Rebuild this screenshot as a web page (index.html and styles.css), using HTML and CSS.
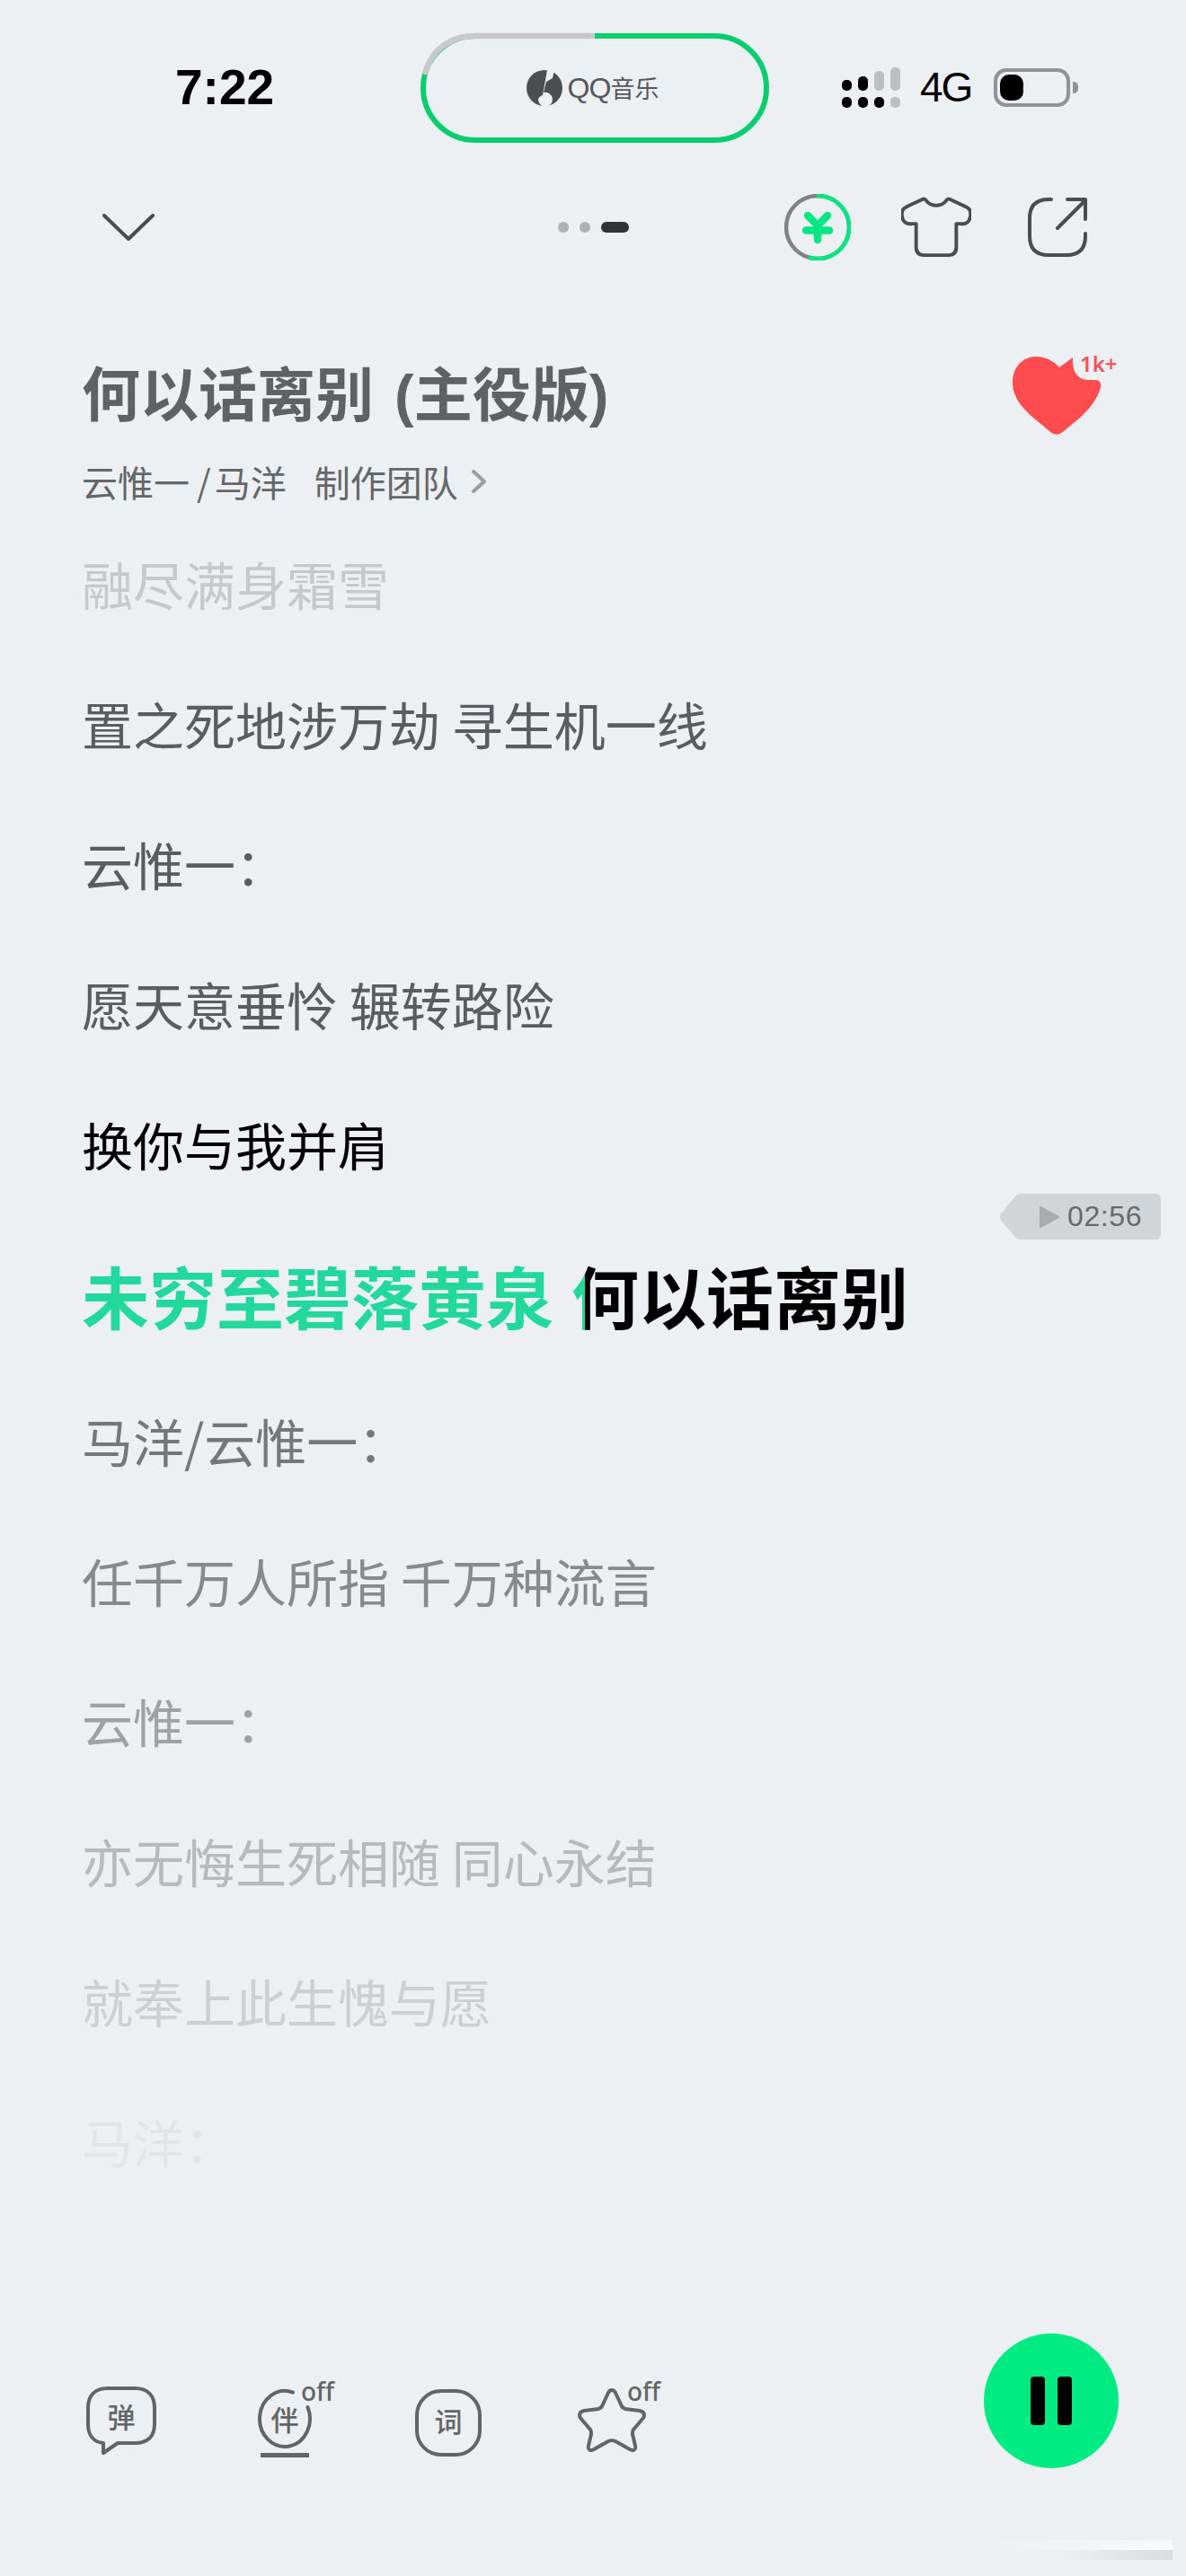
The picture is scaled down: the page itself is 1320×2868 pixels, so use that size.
FILE: index.html
```html
<!DOCTYPE html>
<html lang="zh-CN">
<head>
    <meta charset="UTF-8">
    <title>何以话离别 (主役版)</title>
    <link rel="stylesheet" href="styles.css">
</head>
<body>
    <!-- Status bar -->
    <div class="status-bar">
        <div class="time">7:22</div>
        <div class="island">
            <svg class="island-ring" width="390" height="124" viewBox="0 0 390 124">
                <rect x="4" y="4" width="382" height="116" rx="58" fill="none" stroke="#08ce6f" stroke-width="6"/>
                <path d="M195 4H62C34 4 12 20 6 47" fill="none" stroke="#c9c9c9" stroke-width="6.5"/>
            </svg>
            <svg class="island-logo" width="42" height="42" viewBox="0 0 42 42">
                <ellipse cx="21" cy="21" rx="20" ry="20" fill="#4d4e50"/>
                <path d="M24 1h8l-2 9-7 4-3 12a8 8 0 1 1-6 7 9 9 0 0 1 5-4z" fill="#ecf0f3"/>
                <circle cx="20" cy="31" r="2.5" fill="#ecf0f3"/>
            </svg>
            <span class="island-text"><span class="island-qq">QQ</span>音乐</span>
        </div>
        <div class="status-icons">
            <div class="signal">
                <div class="signal-col"><i class="dot h12"></i><i class="dot h12"></i></div>
                <div class="signal-col"><i class="dot h16"></i><i class="dot h12"></i></div>
                <div class="signal-col"><i class="dot h22 dim"></i><i class="dot h12"></i></div>
                <div class="signal-col"><i class="dot h26 dim"></i><i class="dot h12 dim"></i></div>
            </div>
            <span class="net">4G</span>
            <div class="battery"><div class="battery-fill"></div></div>
            <div class="battery-tip"></div>
        </div>
    </div>

    <!-- Top nav -->
    <div class="nav">
        <svg width="58" height="30" viewBox="0 0 58 30">
            <path d="M2 2L29 28L56 2" fill="none" stroke="#4a4c4f" stroke-width="4" stroke-linecap="round" stroke-linejoin="round"/>
        </svg>
        <div class="pager">
            <i class="pager-dot"></i><i class="pager-dot"></i><i class="pager-current"></i>
        </div>
        <div class="nav-actions">
            <svg class="coin" width="74" height="74" viewBox="0 0 74 74">
                <circle cx="37" cy="37" r="35" fill="none" stroke="#808285" stroke-width="4.5"/>
                <path d="M36 2A35 35 0 1 1 27 70.5" fill="none" stroke="#04e584" stroke-width="4.5"/>
                <path d="M26 24L37 35L48 24M24 40.5H50M37 36V51" fill="none" stroke="#04e584" stroke-width="8.5" stroke-linecap="round" stroke-linejoin="round"/>
            </svg>
            <svg class="shirt" width="78" height="68" viewBox="0 0 80 70">
                <path d="M24 3L5 12C1 14 0 18 1 23C2 29 6 32 12 31H17V58C17 64 20 67 26 67H54C60 67 63 64 63 58V31H68C74 32 78 29 79 23C80 18 79 14 75 12L56 3C54 2 52 3 51 5C48 9 44 10 40 10C36 10 32 9 29 5C28 3 26 2 24 3Z" fill="none" stroke="#4a4c4f" stroke-width="4" stroke-linejoin="round"/>
            </svg>
            <svg class="share" width="68" height="68" viewBox="0 0 68 68">
                <path d="M27 3H24C10 3 3 10 3 24V44C3 58 10 65 24 65H44C58 65 65 58 65 44V41" fill="none" stroke="#4a4c4f" stroke-width="4" stroke-linecap="round"/>
                <path d="M34 35L65 4M45 3H65V25" fill="none" stroke="#4a4c4f" stroke-width="4" stroke-linecap="round" stroke-linejoin="round"/>
            </svg>
        </div>
    </div>

    <!-- Song head -->
    <div class="song">
        <div class="song-info">
            <h1 class="song-title">何以话离别 (主役版)</h1>
            <div class="song-meta">
                <span>云惟一<span class="slash">/</span>马洋</span><span class="team">制作团队</span>
                <svg width="18" height="28" viewBox="0 0 18 28"><path d="M3 3L15 14L3 25" fill="none" stroke="#9a9c9e" stroke-width="4" stroke-linecap="round" stroke-linejoin="round"/></svg>
            </div>
        </div>
        <div class="like">
            <svg width="102" height="88" viewBox="0 0 102 88">
                <path d="M26 0C11 0 0 12 0 29C0 46 12 58 23 68L41 83C47 88 51 88 57 83L75 68C85 59 95 47 98 34C99 28 96 26 91 26H85C72 26 66 16 67 1L52 12C46 5 37 0 26 0Z" fill="#fe4c4f"/>
            </svg>
            <span class="like-count">1k+</span>
        </div>
    </div>

    <!-- Lyrics -->
    <div class="lyrics">
        <p class="line a12">融尽满身霜雪</p>
        <p class="line a70">置之死地涉万劫 寻生机一线</p>
        <p class="line a70">云惟一：</p>
        <p class="line a70">愿天意垂怜 辗转路险</p>
        <p class="line a100">换你与我并肩</p>
        <p class="line current"><span class="sung">未穷至碧落黄泉 </span><span class="sung-part">何</span>以话离别</p>
        <p class="line a60">马洋/云惟一：</p>
        <p class="line a50">任千万人所指 千万种流言</p>
        <p class="line a40">云惟一：</p>
        <p class="line a30">亦无悔生死相随 同心永结</p>
        <p class="line a20">就奉上此生愧与愿</p>
        <p class="line a08">马洋：</p>
    </div>

    <div class="seek">
        <svg width="24" height="26" viewBox="0 0 24 26"><path d="M2 2L22 13L2 24Z" fill="#a9abad" stroke="#a9abad" stroke-width="2" stroke-linejoin="round"/></svg>
        <span>02:56</span>
    </div>

    <!-- Bottom tools -->
    <div class="tools">
        <div class="tool tool-dan">
            <svg width="80" height="80" viewBox="0 0 80 80">
                <path d="M24 2H54C68 2 76 10 76 24V42C76 56 68 63 54 63H35L19 74V63C8 62 2 54 2 42V24C2 10 10 2 24 2Z" fill="none" stroke="#626466" stroke-width="4" stroke-linejoin="round"/>
            </svg>
            <span class="tool-char">弹</span>
        </div>
        <div class="tool tool-ban">
            <svg width="64" height="82" viewBox="0 0 64 82">
                <path d="M41 5.6A28 31 0 1 0 57.4 22" fill="none" stroke="#626466" stroke-width="4" stroke-linecap="round"/>
                <rect x="5" y="73" width="54" height="5" fill="#626466"/>
            </svg>
            <span class="tool-char">伴</span>
            <span class="off">off</span>
        </div>
        <div class="tool tool-ci">
            <svg width="76" height="76" viewBox="0 0 76 76">
                <rect x="3" y="2" width="70" height="71" rx="27" fill="none" stroke="#626466" stroke-width="4"/>
            </svg>
            <span class="tool-char">词</span>
        </div>
        <div class="tool tool-star">
            <svg width="76" height="72" viewBox="0 0 76 72">
                <path d="M38 3C40 3 41 4 42 6L49 21C50 23 51 23 53 24L69 26C74 27 75 31 73 34L62 47C61 48 61 50 61 52L64 65C65 70 62 71 58 69L42 60C40 59 36 59 34 60L18 69C14 71 11 70 12 65L15 52C15 50 15 48 14 47L3 34C1 31 2 27 7 26L23 24C25 23 26 23 27 21L34 6C35 4 36 3 38 3Z" fill="none" stroke="#626466" stroke-width="4" stroke-linejoin="round"/>
            </svg>
            <span class="off">off</span>
        </div>
        <div class="play">
            <i class="play-bar"></i><i class="play-bar"></i>
        </div>
    </div>

    <!-- faint watermark smear, bottom right -->
    <div class="smear">
        <i class="smear-top"></i>
        <i class="smear-bottom"></i>
    </div>
</body>
</html>
```

FILE: styles.css
```css
html, body {
    margin: 0;
    padding: 0;
}
body {
    width: 1320px;
    height: 2868px;
    position: relative;
    overflow: hidden;
    background-color: #ecf0f3;
    font-family: "Noto Sans CJK SC", "Noto Sans", sans-serif;
}
i {
    display: block;
}

/* status bar */
.status-bar {
    height: 124px;
    padding: 36px 0 0 195px;
    display: flex;
    align-items: flex-start;
}
.time {
    width: 272px;
    margin-top: 41px;
    font-family: "Liberation Sans", sans-serif;
    font-size: 55px;
    line-height: 40px;
    font-weight: bold;
    color: #000;
}
.island {
    position: relative;
    width: 390px;
    height: 124px;
    display: flex;
    align-items: center;
    justify-content: center;
    gap: 5px;
    box-sizing: border-box;
    padding-right: 6px;
}
.island-ring {
    position: absolute;
    left: 0;
    top: 0;
}
.island-text {
    font-size: 27px;
    line-height: 40px;
    color: #55575a;
}
.island-qq {
    font-family: "Liberation Sans", sans-serif;
    font-size: 32px;
    letter-spacing: -1px;
}
.status-icons {
    display: flex;
    align-items: center;
    height: 46px;
    margin: 38px 0 0 80px;
}
.signal {
    display: flex;
    gap: 7px;
    align-items: flex-end;
}
.signal-col {
    display: flex;
    flex-direction: column;
    gap: 7px;
    width: 11px;
}
.dot {
    width: 11px;
    border-radius: 5px;
    background: #000;
}
.h12 { height: 12px; }
.h16 { height: 16px; }
.h22 { height: 22px; }
.h26 { height: 26px; }
.dot.dim { background: #bcbfc1; }
.net {
    margin-left: 22px;
    font-family: "Liberation Sans", sans-serif;
    font-size: 46px;
    line-height: 40px;
    color: #000;
    letter-spacing: -2px;
}
.battery {
    margin-left: 25px;
    width: 77px;
    height: 35px;
    border: 4px solid #909395;
    border-radius: 14px;
    display: flex;
    align-items: center;
}
.battery-fill {
    margin-left: 3px;
    width: 26px;
    height: 29px;
    border-radius: 10px;
    background: #000;
}
.battery-tip {
    margin-left: 3px;
    width: 6px;
    height: 13px;
    border-radius: 0 5px 5px 0;
    background: #909395;
}

/* nav */
.nav {
    margin-top: 42px;
    height: 102px;
    display: flex;
    align-items: center;
    padding-left: 114px;
}
.pager {
    margin-left: 449px;
    display: flex;
    gap: 12px;
    align-items: center;
}
.pager-dot {
    width: 12px;
    height: 12px;
    border-radius: 6px;
    background: #aeb0b2;
}
.pager-current {
    width: 31px;
    height: 12px;
    border-radius: 6px;
    background: #303234;
}
.nav-actions {
    margin-left: 173px;
    display: flex;
    align-items: center;
}
.shirt {
    margin-left: 56px;
}
.share {
    margin-left: 62px;
}

/* song head */
.song {
    margin-top: 95px;
    padding-left: 91px;
    display: flex;
    height: 130px;
}
.song-info {
    width: 1036px;
}
.song-title {
    margin: 0;
    font-size: 65px;
    line-height: 84px;
    font-weight: 700;
    color: #5f6163;
    word-spacing: 5px;
    font-family: "Liberation Sans", "Noto Sans CJK SC", sans-serif;
}
.song-meta {
    margin-top: 28px;
    display: flex;
    align-items: center;
    font-size: 40px;
    line-height: 50px;
    color: #646668;
}
.slash {
    margin: 0 4px 0 8px;
}
.team {
    margin-left: 31px;
}
.song-meta svg {
    margin-left: 14px;
}
.like {
    position: relative;
    margin-top: -2px;
    width: 140px;
}
.like-count {
    position: absolute;
    left: 75px;
    top: -8px;
    font-family: "Noto Sans", sans-serif;
    font-size: 24px;
    line-height: 32px;
    font-weight: 600;
    color: #f3545a;
}

/* lyrics */
.lyrics {
    margin-top: 79px;
    padding-left: 91px;
}
.line {
    margin: 0;
    height: 156px;
    font-size: 57px;
    line-height: 82px;
    color: #000;
    white-space: pre;
}
.line.current {
    height: 174px;
    padding-top: 9px;
    box-sizing: border-box;
    line-height: 90px;
    font-size: 75px;
    font-weight: 700;
    word-spacing: 3px;
}
.a100 { color: #000; }
.a70 { color: #5a5c5f; }
.a60 { color: #75777a; }
.a50 { color: #87898c; }
.a40 { color: #9fa1a4; }
.a30 { color: #b7b9bc; }
.a20 { color: #cdd0d3; }
.a12 { color: #c6c9cb; }
.a08 { color: #e2e5e8; }
.sung {
    color: #22d99b;
}
/* karaoke wipe stops part way through this character */
.sung-part {
    color: transparent;
    background: linear-gradient(90deg, #22d99b 15px, #000 15px);
    -webkit-background-clip: text;
    background-clip: text;
}

/* seek tag */
.seek {
    position: absolute;
    left: 1113px;
    top: 1329px;
    width: 179px;
    height: 51px;
    box-sizing: border-box;
    padding-left: 43px;
    display: flex;
    align-items: center;
    gap: 8px;
    background: #d1d5d8;
    clip-path: path("M2 21L16 4Q19 0 24 0H173Q179 0 179 6V45Q179 51 173 51H24Q19 51 16 47L2 31Q-2 25 2 21Z");
    font-family: "Liberation Sans", sans-serif;
    font-size: 32px;
    letter-spacing: 0.6px;
    color: #66686a;
}

/* bottom tools */
.tools {
    position: absolute;
    left: 0;
    top: 2598px;
    width: 1320px;
    height: 150px;
}
.tool {
    position: absolute;
}
.tool svg {
    display: block;
}
.tool-char {
    position: absolute;
    left: 0;
    font-size: 31px;
    line-height: 40px;
    font-weight: 500;
    color: #626466;
    width: 100%;
    text-align: center;
}
.tool-dan { left: 96px; top: 59px; width: 78px; }
.tool-dan .tool-char { top: 13px; }
.tool-ban { left: 285px; top: 60px; width: 64px; }
.tool-ban .tool-char { top: 15px; }
.tool-ci { left: 461px; top: 62px; width: 76px; }
.tool-ci .tool-char { top: 15px; }
.tool-star { left: 643px; top: 60px; width: 76px; }
.off {
    position: absolute;
    top: -12px;
    font-family: "Noto Sans", sans-serif;
    font-size: 28px;
    line-height: 32px;
    font-weight: 500;
    color: #626466;
}
.tool-ban .off { left: 50px; }
.tool-star .off { left: 55px; }
.play {
    position: absolute;
    left: 1095px;
    top: 0;
    width: 150px;
    height: 150px;
    border-radius: 50%;
    background: #00ec83;
    display: flex;
    align-items: center;
    justify-content: center;
    gap: 14px;
}
.play-bar {
    width: 16px;
    height: 54px;
    border-radius: 4px;
    background: #000;
}

/* watermark */
.smear {
    position: absolute;
    left: 1100px;
    top: 2828px;
    width: 205px;
}
.smear-top {
    height: 11px;
    background: linear-gradient(90deg, rgba(255, 255, 255, 0), rgba(255, 255, 255, 0.6));
}
.smear-bottom {
    height: 11px;
    background: linear-gradient(90deg, rgba(0, 0, 0, 0) 40%, rgba(0, 0, 0, 0.08));
}
```
